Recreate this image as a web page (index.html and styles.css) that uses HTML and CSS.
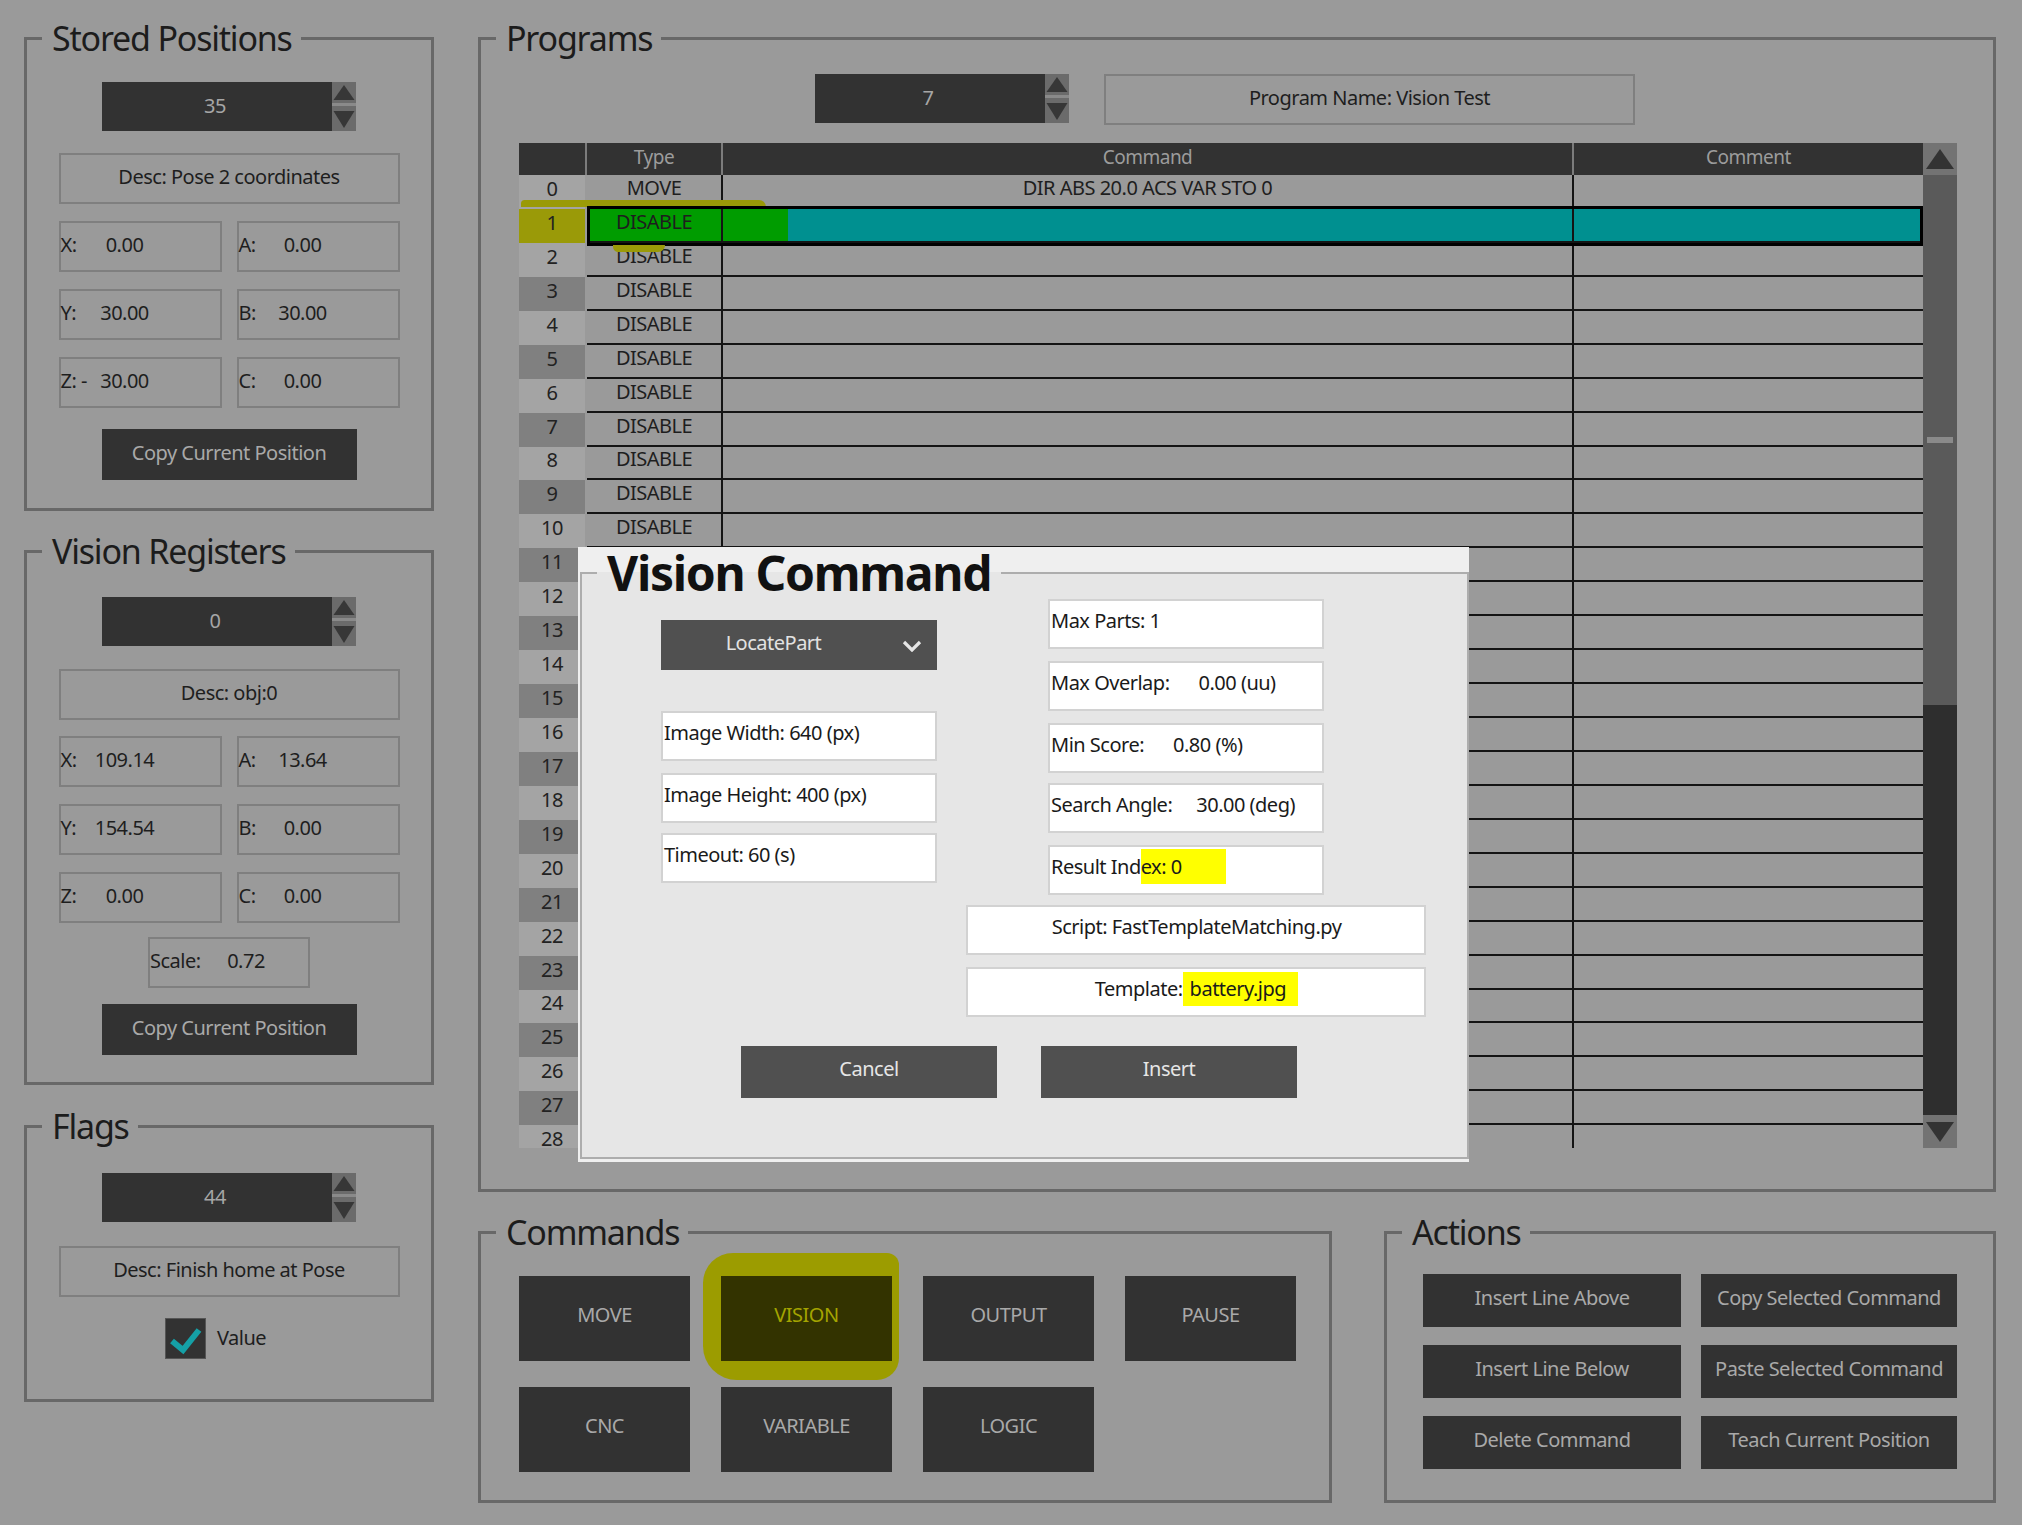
FILE: index.html
```html
<!DOCTYPE html>
<html>
<head>
<meta charset="utf-8">
<title>Robot Programmer</title>
<link rel="stylesheet" href="styles.css">
</head>
<body>
<div class="app">
  <div class="left">
    <fieldset class="group g-stored">
      <legend>Stored Positions</legend>
      <div class="gbody">
        <div class="spin"><span class="spin-val">35</span><svg class="spin-arrows" viewBox="0 0 24 49"><rect width="24" height="49" fill="#6b6b6b"/><path d="M1.5 18 L12 3 L22.5 18 Z" fill="#373737"/><rect y="21" width="24" height="3" fill="#8a8a8a"/><path d="M1.5 29 L22.5 29 L12 46 Z" fill="#373737"/></svg></div>
        <div class="field desc">Desc: Pose 2 coordinates</div>
        <div class="pair"><div class="field pos"><span class="lbl">X:</span><span class="val">0.00</span></div><div class="field pos"><span class="lbl">A:</span><span class="val">0.00</span></div></div>
        <div class="pair"><div class="field pos"><span class="lbl">Y:</span><span class="val">30.00</span></div><div class="field pos"><span class="lbl">B:</span><span class="val">30.00</span></div></div>
        <div class="pair"><div class="field pos"><span class="lbl">Z: -</span><span class="val">30.00</span></div><div class="field pos"><span class="lbl">C:</span><span class="val">0.00</span></div></div>
        <div class="dbtn copy">Copy Current Position</div>
      </div>
    </fieldset>
    <fieldset class="group g-vision">
      <legend>Vision Registers</legend>
      <div class="gbody">
        <div class="spin"><span class="spin-val">0</span><svg class="spin-arrows" viewBox="0 0 24 49"><rect width="24" height="49" fill="#6b6b6b"/><path d="M1.5 18 L12 3 L22.5 18 Z" fill="#373737"/><rect y="21" width="24" height="3" fill="#8a8a8a"/><path d="M1.5 29 L22.5 29 L12 46 Z" fill="#373737"/></svg></div>
        <div class="field desc">Desc: obj:0</div>
        <div class="pair"><div class="field pos"><span class="lbl">X:</span><span class="val">109.14</span></div><div class="field pos"><span class="lbl">A:</span><span class="val">13.64</span></div></div>
        <div class="pair"><div class="field pos"><span class="lbl">Y:</span><span class="val">154.54</span></div><div class="field pos"><span class="lbl">B:</span><span class="val">0.00</span></div></div>
        <div class="pair"><div class="field pos"><span class="lbl">Z:</span><span class="val">0.00</span></div><div class="field pos"><span class="lbl">C:</span><span class="val">0.00</span></div></div>
        <div class="field pos scale"><span class="lbl">Scale:</span><span class="val">0.72</span></div>
        <div class="dbtn copy">Copy Current Position</div>
      </div>
    </fieldset>
    <fieldset class="group g-flags">
      <legend>Flags</legend>
      <div class="gbody">
        <div class="spin"><span class="spin-val">44</span><svg class="spin-arrows" viewBox="0 0 24 49"><rect width="24" height="49" fill="#6b6b6b"/><path d="M1.5 18 L12 3 L22.5 18 Z" fill="#373737"/><rect y="21" width="24" height="3" fill="#8a8a8a"/><path d="M1.5 29 L22.5 29 L12 46 Z" fill="#373737"/></svg></div>
        <div class="field desc">Desc: Finish home at Pose</div>
        <div class="check"><svg class="check-box" viewBox="0 0 41 41"><rect x="0.5" y="0.5" width="40" height="40" fill="#323232" stroke="#555"/><polyline points="7,23 18,32 34,12" fill="none" stroke="#15a0a6" stroke-width="6"/></svg><span>Value</span></div>
      </div>
    </fieldset>
  </div>

  <div class="right">
    <fieldset class="group g-programs">
      <legend>Programs</legend>
      <div class="prog-top">
        <div class="spin"><span class="spin-val">7</span><svg class="spin-arrows" viewBox="0 0 24 49"><rect width="24" height="49" fill="#6b6b6b"/><path d="M1.5 18 L12 3 L22.5 18 Z" fill="#373737"/><rect y="21" width="24" height="3" fill="#8a8a8a"/><path d="M1.5 29 L22.5 29 L12 46 Z" fill="#373737"/></svg></div>
        <div class="field namebox">Program Name: Vision Test</div>
      </div>
      <div class="table">
        <div class="tgrid">
          <div class="thead"><div></div><div>Type</div><div>Command</div><div>Comment</div></div>
          <div class="tbody">
            <div class="tr"><div class="rn">0</div><div class="ty">MOVE</div><div class="cm">DIR ABS 20.0 ACS VAR STO 0</div><div class="co"></div></div>
            <div class="tr sel"><span class="mark mark-top"></span><span class="mark mark-bot"></span><div class="rn">1</div><div class="ty">DISABLE</div><div class="cm"></div><div class="co"></div></div>
            <div class="tr"><div class="rn">2</div><div class="ty">DISABLE</div><div class="cm"></div><div class="co"></div></div>
            <div class="tr"><div class="rn">3</div><div class="ty">DISABLE</div><div class="cm"></div><div class="co"></div></div>
            <div class="tr"><div class="rn">4</div><div class="ty">DISABLE</div><div class="cm"></div><div class="co"></div></div>
            <div class="tr"><div class="rn">5</div><div class="ty">DISABLE</div><div class="cm"></div><div class="co"></div></div>
            <div class="tr"><div class="rn">6</div><div class="ty">DISABLE</div><div class="cm"></div><div class="co"></div></div>
            <div class="tr"><div class="rn">7</div><div class="ty">DISABLE</div><div class="cm"></div><div class="co"></div></div>
            <div class="tr"><div class="rn">8</div><div class="ty">DISABLE</div><div class="cm"></div><div class="co"></div></div>
            <div class="tr"><div class="rn">9</div><div class="ty">DISABLE</div><div class="cm"></div><div class="co"></div></div>
            <div class="tr"><div class="rn">10</div><div class="ty">DISABLE</div><div class="cm"></div><div class="co"></div></div>
            <div class="tr"><div class="rn">11</div><div class="ty"></div><div class="cm"></div><div class="co"></div></div>
            <div class="tr"><div class="rn">12</div><div class="ty"></div><div class="cm"></div><div class="co"></div></div>
            <div class="tr"><div class="rn">13</div><div class="ty"></div><div class="cm"></div><div class="co"></div></div>
            <div class="tr"><div class="rn">14</div><div class="ty"></div><div class="cm"></div><div class="co"></div></div>
            <div class="tr"><div class="rn">15</div><div class="ty"></div><div class="cm"></div><div class="co"></div></div>
            <div class="tr"><div class="rn">16</div><div class="ty"></div><div class="cm"></div><div class="co"></div></div>
            <div class="tr"><div class="rn">17</div><div class="ty"></div><div class="cm"></div><div class="co"></div></div>
            <div class="tr"><div class="rn">18</div><div class="ty"></div><div class="cm"></div><div class="co"></div></div>
            <div class="tr"><div class="rn">19</div><div class="ty"></div><div class="cm"></div><div class="co"></div></div>
            <div class="tr"><div class="rn">20</div><div class="ty"></div><div class="cm"></div><div class="co"></div></div>
            <div class="tr"><div class="rn">21</div><div class="ty"></div><div class="cm"></div><div class="co"></div></div>
            <div class="tr"><div class="rn">22</div><div class="ty"></div><div class="cm"></div><div class="co"></div></div>
            <div class="tr"><div class="rn">23</div><div class="ty"></div><div class="cm"></div><div class="co"></div></div>
            <div class="tr"><div class="rn">24</div><div class="ty"></div><div class="cm"></div><div class="co"></div></div>
            <div class="tr"><div class="rn">25</div><div class="ty"></div><div class="cm"></div><div class="co"></div></div>
            <div class="tr"><div class="rn">26</div><div class="ty"></div><div class="cm"></div><div class="co"></div></div>
            <div class="tr"><div class="rn">27</div><div class="ty"></div><div class="cm"></div><div class="co"></div></div>
            <div class="tr"><div class="rn">28</div><div class="ty"></div><div class="cm"></div><div class="co"></div></div>
          </div>
        </div>
        <div class="vscroll">
          <div class="sb-btn"><svg width="28" height="20" viewBox="0 0 28 20"><path d="M0 20 L14 0 L28 20 Z" fill="#333"/></svg></div>
          <div class="sb-thumb"><span class="sb-grip"></span></div>
          <div class="sb-track"></div>
          <div class="sb-btn sb-down"><svg width="28" height="20" viewBox="0 0 28 20"><path d="M0 0 L28 0 L14 20 Z" fill="#333"/></svg></div>
        </div>
      </div>
    </fieldset>

    <div class="bottom">
      <fieldset class="group g-commands">
        <legend>Commands</legend>
        <div class="cmd-grid">
          <div class="dbtn cbtn">MOVE</div>
          <div class="dbtn cbtn vision">VISION</div>
          <div class="dbtn cbtn">OUTPUT</div>
          <div class="dbtn cbtn">PAUSE</div>
          <div class="dbtn cbtn">CNC</div>
          <div class="dbtn cbtn">VARIABLE</div>
          <div class="dbtn cbtn">LOGIC</div>
        </div>
      </fieldset>
      <fieldset class="group g-actions">
        <legend>Actions</legend>
        <div class="act-grid">
          <div class="dbtn abtn">Insert Line Above</div>
          <div class="dbtn abtn">Copy Selected Command</div>
          <div class="dbtn abtn">Insert Line Below</div>
          <div class="dbtn abtn">Paste Selected Command</div>
          <div class="dbtn abtn">Delete Command</div>
          <div class="dbtn abtn">Teach Current Position</div>
        </div>
      </fieldset>
    </div>
  </div>

  <div class="modal">
    <fieldset class="dlg">
      <legend>Vision Command</legend>
      <div class="dlg-cols">
        <div class="dcol dcol-l">
          <div class="dd"><span class="dd-text">LocatePart</span><svg class="dd-chev" width="20" height="12" viewBox="0 0 20 12"><polyline points="2,2 10,10 18,2" fill="none" stroke="#e6e6e6" stroke-width="3.2"/></svg></div>
          <div class="dfield">Image Width: 640 (px)</div>
          <div class="dfield">Image Height: 400 (px)</div>
          <div class="dfield">Timeout: 60 (s)</div>
        </div>
        <div class="dcol dcol-r">
          <div class="dfield">Max Parts: 1</div>
          <div class="dfield">Max Overlap:<span class="dval">0.00 (uu)</span></div>
          <div class="dfield">Min Score:<span class="dval">0.80 (%)</span></div>
          <div class="dfield">Search Angle:<span class="dval dval-s">30.00 (deg)</span></div>
          <div class="dfield">Result Ind<span class="hl hl-idx">ex: 0</span></div>
        </div>
      </div>
      <div class="dfield dwide">Script: FastTemplateMatching.py</div>
      <div class="dfield dwide">Template:<span class="hl hl-tpl">battery.jpg</span></div>
      <div class="dbtns">
        <div class="dlgbtn">Cancel</div>
        <div class="dlgbtn">Insert</div>
      </div>
    </fieldset>
  </div>
</div>
</body>
</html>
```

FILE: styles.css
```css
* { box-sizing: border-box; }
html, body { margin: 0; padding: 0; }
body {
  width: 2022px;
  height: 1525px;
  overflow: hidden;
  background: #9a9a9a;
  font-family: "Noto Sans", "Open Sans", sans-serif;
  font-size: 20px;
  letter-spacing: -0.5px;
  color: #1e1e1e;
}
.app {
  position: relative;
  display: flex;
  align-items: flex-start;
  gap: 44px;
  width: 2022px;
  height: 1525px;
  padding: 15px 0 0 24px;
}
.left { width: 410px; display: flex; flex-direction: column; }
.right { width: 1518px; display: flex; flex-direction: column; gap: 17px; }

.group {
  margin: 0;
  padding: 0;
  min-width: 0;
  border: 3px solid #686868;
}
.group > legend {
  margin-left: 15px;
  padding: 0 9px 0 10px;
  font-size: 34px;
  letter-spacing: -1.2px;
  line-height: 46px;
  color: #1c1c1c;
}
.gbody { display: flex; flex-direction: column; align-items: center; }

.g-stored { height: 496px; }
.g-stored .gbody { padding-top: 21px; }
.g-vision { height: 557px; margin-top: 17px; }
.g-vision .gbody { padding-top: 23px; }
.g-flags { height: 299px; margin-top: 18px; }
.g-flags .gbody { padding-top: 24px; }

/* spinner */
.spin { display: flex; width: 254px; height: 49px; background: #323232; flex: none; }
.spin-val { flex: 1; display: flex; align-items: center; justify-content: center; color: #a6a6a6; padding: 0 4px 3px 0; }
.spin-arrows { display: block; width: 24px; height: 49px; }

/* plain fields */
.field {
  border: 2px solid #7f7f7f;
  height: 51px;
  display: flex;
  align-items: center;
  padding-bottom: 4px;
  color: #1e1e1e;
  white-space: nowrap;
}
.desc { width: 341px; justify-content: center; margin-top: 22px; }
.g-vision .desc { margin-top: 23px; }
.g-flags .desc { margin-top: 24px; }
.pair { display: flex; gap: 15px; margin-top: 17px; }
.g-vision .desc + .pair { margin-top: 16px; }
.pos { width: 163px; }
.lbl { width: 28px; flex: none; }
.val { width: 72px; text-align: center; flex: none; }
.scale { width: 162px; margin-top: 14px; }
.scale .lbl { width: 58px; }
.scale .val { width: 76px; }

.dbtn {
  background: #323232;
  color: #a9a9a9;
  display: flex;
  align-items: center;
  justify-content: center;
  padding-bottom: 5px;
  white-space: nowrap;
}
.copy { width: 255px; height: 51px; margin-top: 21px; }
.g-vision .copy { margin-top: 16px; }

.check {
  align-self: flex-start;
  margin: 21px 0 0 138px;
  display: flex;
  align-items: center;
  gap: 11px;
}
.check span { padding-bottom: 3px; }
.check-box { width: 41px; height: 41px; display: block; }

/* programs */
.g-programs { height: 1177px; }
.prog-top { display: flex; align-items: flex-start; gap: 35px; margin: 13px 0 0 334px; }
.namebox { width: 531px; justify-content: center; }

.table { display: flex; margin: 18px 0 0 38px; width: 1438px; height: 1005px; }
.tgrid { width: 1404px; height: 1005px; overflow: hidden; }
.thead {
  display: grid;
  grid-template-columns: 66px 134px 849px 349px;
  column-gap: 2px;
  height: 32px;
  background: #7c7c7c;
}
.thead div {
  background: #323232;
  color: #9c9c9c;
  font-size: 19px;
  display: flex;
  align-items: center;
  justify-content: center;
  padding-bottom: 5px;
}
.tr {
  display: grid;
  grid-template-columns: 68px 134px 851px 351px;
  height: 33.94px;
}
.tr > div {
  display: flex;
  align-items: center;
  justify-content: center;
  white-space: nowrap;
  padding-bottom: 6px;
  line-height: 16px;
}
.rn { border-right: 2px solid #9a9a9a; background: #a4a4a4; color: #222; }
.tr:nth-child(even) .rn { background: #808080; }
.ty, .cm, .co { border-bottom: 2px solid #141414; color: #1e1e1e; }
.cm, .co { border-left: 2px solid #141414; }

.tr.sel { position: relative; }
.tr.sel .rn { background: #9a9a08; }
.tr.sel .ty { background: #009c00; }
.tr.sel .cm { background: linear-gradient(90deg, #009c00 0 65px, #009090 65px); }
.tr.sel .co { background: #009090; }
.tr.sel::after {
  content: "";
  position: absolute;
  left: 68px; right: 0; top: -3px; bottom: -3px;
  border: 3px solid #000;
  pointer-events: none;
}
.mark { position: absolute; background: #9a9a08; }
.mark-top { left: 2px; top: -9px; width: 245px; height: 7px; border-radius: 5px 10px 0 0; }
.mark-bot { left: 94px; top: 36px; width: 52px; height: 7px; border-radius: 0 0 8px 6px; z-index: 1; }

.vscroll { width: 34px; height: 1005px; display: flex; flex-direction: column; }
.sb-btn { height: 32px; background: #737373; display: flex; align-items: center; justify-content: center; flex: none; }
.sb-down { height: 33px; }
.sb-thumb { height: 530px; background: #5a5a5a; display: flex; align-items: center; justify-content: center; flex: none; }
.sb-grip { width: 26px; height: 6px; background: #8a8a8a; }
.sb-track { flex: 1; background: #2e2e2e; }

/* bottom groups */
.bottom { display: flex; gap: 52px; }
.g-commands { width: 854px; height: 294px; }
.g-actions { width: 612px; height: 294px; }
.cmd-grid {
  display: grid;
  grid-template-columns: repeat(4, 171px);
  grid-auto-rows: 85px;
  column-gap: 31px;
  row-gap: 26px;
  margin: 21px 0 0 38px;
}
.cbtn { padding-bottom: 9px; }
.cbtn.vision { position: relative; background: #333300; color: #a4a400; }
.cbtn.vision::before {
  content: "";
  position: absolute;
  left: -18px; right: -7px; top: -23px; bottom: -19px;
  background: #9c9c00;
  border-radius: 30px 12px 22px 34px;
  z-index: -1;
}
.act-grid {
  display: grid;
  grid-template-columns: 258px 256px;
  grid-auto-rows: 53px;
  column-gap: 20px;
  row-gap: 18px;
  margin: 19px 0 0 36px;
}
.abtn { padding-bottom: 7px; }

/* modal dialog */
.modal {
  position: absolute;
  left: 578px;
  top: 547px;
  width: 891px;
  height: 615px;
  background: #efefef;
  padding: 0 0 3px 2px;
}
.dlg {
  margin: 0;
  padding: 0;
  min-width: 0;
  height: 100%;
  border: 2px solid #adadad;
  background: #e6e6e6;
}
.dlg > legend {
  margin-left: 15px;
  padding: 0 10px;
  font-size: 48px;
  font-weight: 700;
  letter-spacing: -1.3px;
  line-height: 52px;
  color: #111;
}
.dlg-cols { display: flex; align-items: flex-start; gap: 111px; padding-left: 79px; }
.dcol { width: 276px; display: flex; flex-direction: column; }
.dcol-l { padding-top: 21px; }
.dd {
  height: 50px;
  background: #505050;
  color: #e2e2e2;
  display: flex;
  align-items: center;
}
.dd-text { flex: 1; text-align: center; padding: 0 0 5px 4px; }
.dd-chev { margin: 2px 15px 0 20px; display: block; }
.dfield {
  height: 50px;
  background: #fff;
  border: 2px solid #d2d2d2;
  display: flex;
  align-items: center;
  padding: 0 0 7px 1px;
  color: #1a1a1a;
  white-space: nowrap;
}
.dcol-l .dd + .dfield { margin-top: 41px; }
.dcol-l .dfield + .dfield { margin-top: 12px; }
.dcol-l .dfield:last-child { margin-top: 10px; }
.dcol-r .dfield + .dfield { margin-top: 12px; }
.dcol-r .dfield:nth-child(4) { margin-top: 10px; }
.dval { margin-left: 29px; }
.dval-s { margin-left: 24px; }
.hl { background: #ffff00; display: inline-block; line-height: 35px; }
.hl-idx { padding-right: 44px; margin-top: -1px; }
.hl-tpl { padding: 0 12px 0 7px; line-height: 34px; }
.dwide { width: 460px; margin-left: 384px; justify-content: center; margin-top: 12px; }
.dlg-cols + .dwide { margin-top: 10px; }
.dbtns { display: flex; gap: 44px; margin: 29px 0 0 159px; }
.dlgbtn {
  width: 256px;
  height: 52px;
  background: #505050;
  color: #e6e6e6;
  display: flex;
  align-items: center;
  justify-content: center;
  padding-bottom: 7px;
}
```
